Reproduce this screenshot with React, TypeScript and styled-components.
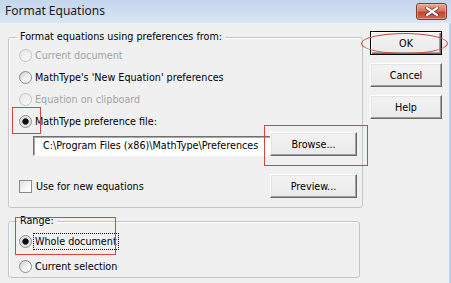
import React from 'react';
import styled, { createGlobalStyle, css } from 'styled-components';

const Global = createGlobalStyle`
  html, body { margin: 0; padding: 0; background: #f0f0f0; }
  body { font-family: "DejaVu Sans Condensed", "Liberation Sans", Arial, sans-serif; font-size: 10.7px; color: #000; }
  * { box-sizing: border-box; }
`;

const Window = styled.div`
  position: relative;
  width: 451px;
  height: 283px;
  background: #f0f0f0;
  overflow: hidden;
  display: flex;
  flex-direction: column;
`;

const TitleBar = styled.div`
  height: 23px;
  flex: none;
  background: linear-gradient(#c3d6ec, #d9e6f4);
  display: flex;
  align-items: flex-start;
  justify-content: space-between;
  padding: 0 4px 0 5px;
`;

const Title = styled.span`
  font-family: "Noto Sans", "Open Sans", sans-serif;
  font-size: 12px;
  line-height: 22px;
  color: #1b1b1b;
`;

const CloseButton = styled.div`
  margin-top: 3px;
  width: 31px;
  height: 17px;
  border: 1px solid #7d3a33;
  border-radius: 3px;
  background: linear-gradient(#eaa897 0%, #d8765f 45%, #c4432c 55%, #d3684f 100%);
  box-shadow: inset 0 0 0 1px rgba(255, 210, 200, 0.45);
  display: flex;
  align-items: center;
  justify-content: center;
`;

const Body = styled.div`
  flex: 1;
  display: flex;
  gap: 7px;
  padding: 8px 0 0 8px;
  border-right: 2px solid #b9d1ea;
`;

const LeftColumn = styled.div`
  width: 355px;
  padding-top: 6px;
  display: flex;
  flex-direction: column;
  gap: 13px;
`;

const RightColumn = styled.div`
  width: 72px;
  display: flex;
  flex-direction: column;
  gap: 8px;
`;

const Group = styled.div<{ $w: number; $h: number; $pt: number }>`
  position: relative;
  width: ${p => p.$w}px;
  height: ${p => p.$h}px;
  border: 1px solid #bfc5c9;
  border-radius: 3px;
  box-shadow: inset 1px 1px 0 #fff;
  padding: ${p => p.$pt}px 5px 0 10px;
  display: flex;
  flex-direction: column;
`;

const Legend = styled.span`
  position: absolute;
  left: 8px;
  top: -8px;
  padding: 0 3px;
  line-height: 13px;
  background: #f0f0f0;
`;

const OptionRow = styled.label<{ $h: number; $mt?: number }>`
  display: flex;
  align-items: center;
  height: ${p => p.$h}px;
  margin-top: ${p => p.$mt ?? 0}px;
  gap: 1px;
`;

const RadioMark = styled.span<{ $checked?: boolean; $disabled?: boolean }>`
  width: 13px;
  height: 13px;
  flex: none;
  border-radius: 50%;
  border: 1px solid ${p => (p.$disabled ? '#c4c4c4' : '#8a8a8a')};
  background: ${p =>
    p.$checked
      ? 'radial-gradient(circle at 50% 50%, #0c0c0c 0 2.4px, #4a4a4a 3px, #dcdcdc 3.6px, #fafafa 100%)'
      : p.$disabled
      ? 'linear-gradient(135deg, #e6e6e6, #fbfbfb)'
      : 'linear-gradient(135deg, #cfcfcf, #f6f6f6 60%, #ffffff)'};
`;

const CheckMark = styled.span`
  width: 13px;
  height: 13px;
  flex: none;
  margin-right: 1px;
  border: 1px solid #8a8a8a;
  background: linear-gradient(135deg, #dcdcdc, #f8f8f8 60%, #fff);
`;

const OptionText = styled.span<{ $disabled?: boolean; $focus?: boolean }>`
  color: ${p => (p.$disabled ? '#a3a3a3' : '#000')};
  line-height: 15px;
  padding: 0 1px;
  border: 1px solid transparent;
  ${p =>
    p.$focus &&
    css`
      border: 1px dotted #000;
    `}
`;

const FileRow = styled.div`
  display: flex;
  align-items: flex-end;
  height: 24px;
  margin-left: 14px;
`;

const PathField = styled.div`
  width: 237px;
  height: 20px;
  border-top: 1px solid #6f6f6f;
  border-left: 1px solid #6f6f6f;
  border-bottom: 1px solid #fff;
  box-shadow: inset 1px 1px 0 #a9a9a9;
  background: #fff;
  padding-left: 9px;
  line-height: 18px;
  white-space: nowrap;
  overflow: hidden;
`;

const BottomRow = styled.div`
  display: flex;
  align-items: center;
  justify-content: space-between;
  margin-top: 18px;
`;

const Button = styled.div<{ $w: number; $default?: boolean }>`
  width: ${p => p.$w}px;
  height: 24px;
  flex: none;
  display: flex;
  align-items: center;
  justify-content: center;
  background: linear-gradient(#f3f3f3, #eaeaea);
  border: 1px solid;
  border-color: #fff #696969 #696969 #fff;
  box-shadow: inset -1px -1px 0 #a0a0a0, inset 1px 1px 0 #e3e3e3;
  ${p =>
    p.$default &&
    css`
      border-color: #000;
      box-shadow: inset 1px 1px 0 #fff, inset -1px -1px 0 #696969, inset -2px -2px 0 #a0a0a0;
    `}
`;

const Mark = styled.div<{ $x: number; $y: number; $w: number; $h: number; $round?: boolean }>`
  position: absolute;
  left: ${p => p.$x}px;
  top: ${p => p.$y}px;
  width: ${p => p.$w}px;
  height: ${p => p.$h}px;
  border: 1px solid #d2463f;
  border-radius: ${p => (p.$round ? '50%' : '0')};
  pointer-events: none;
`;

export default function App() {
  return (
    <>
      <Global />
      <Window>
        <TitleBar>
          <Title>Format Equations</Title>
          <CloseButton>
            <svg width="14" height="9" viewBox="0 0 14 9">
              <path d="M2 1 L12 8 M12 1 L2 8" stroke="#5a2620" strokeWidth="3.6" strokeLinecap="round" />
              <path d="M2 1 L12 8 M12 1 L2 8" stroke="#ffffff" strokeWidth="2.2" strokeLinecap="round" />
            </svg>
          </CloseButton>
        </TitleBar>
        <Body>
          <LeftColumn>
            <Group $w={355} $h={171} $pt={6}>
              <Legend>Format equations using preferences from:</Legend>
              <OptionRow $h={22}>
                <RadioMark $disabled />
                <OptionText $disabled>Current document</OptionText>
              </OptionRow>
              <OptionRow $h={22}>
                <RadioMark />
                <OptionText>MathType's 'New Equation' preferences</OptionText>
              </OptionRow>
              <OptionRow $h={22}>
                <RadioMark $disabled />
                <OptionText $disabled>Equation on clipboard</OptionText>
              </OptionRow>
              <OptionRow $h={22}>
                <RadioMark $checked />
                <OptionText>MathType preference file:</OptionText>
              </OptionRow>
              <FileRow>
                <PathField>C:\Program Files (x86)\MathType\Preferences</PathField>
                <Button $w={87}>Browse...</Button>
              </FileRow>
              <BottomRow>
                <OptionRow $h={24}>
                  <CheckMark />
                  <OptionText>Use for new equations</OptionText>
                </OptionRow>
                <Button $w={87}>Preview...</Button>
              </BottomRow>
            </Group>
            <Group $w={352} $h={57} $pt={10}>
              <Legend>Range:</Legend>
              <OptionRow $h={18}>
                <RadioMark $checked />
                <OptionText $focus>Whole document</OptionText>
              </OptionRow>
              <OptionRow $h={18} $mt={7}>
                <RadioMark />
                <OptionText>Current selection</OptionText>
              </OptionRow>
            </Group>
          </LeftColumn>
          <RightColumn>
            <Button $w={72} $default>OK</Button>
            <Button $w={72}>Cancel</Button>
            <Button $w={72}>Help</Button>
          </RightColumn>
        </Body>
        <Mark $x={361} $y={33} $w={87} $h={21} $round />
        <Mark $x={12} $y={107} $w={29} $h={27} />
        <Mark $x={264} $y={125} $w={104} $h={41} />
        <Mark $x={15} $y={217} $w={101} $h={38} />
      </Window>
    </>
  );
}
